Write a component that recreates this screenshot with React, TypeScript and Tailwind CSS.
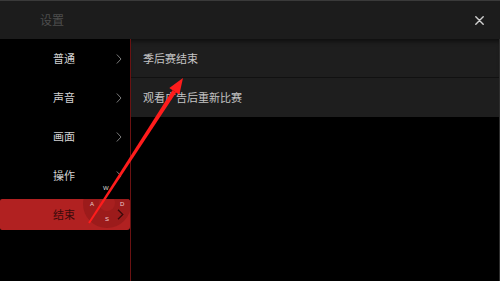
export default function App() {
  const items = ["普通", "声音", "画面", "操作"];
  return (
    <div className="relative w-[500px] h-[281px] overflow-hidden bg-black font-['Noto_Sans_CJK_SC',sans-serif]">
      <div className="h-[39px] bg-[#1c1c1c] border-t border-[#3a3a3a] flex items-center justify-between pl-[40px] pr-[16px]">
        <span className="text-[12px] text-[#4d4d4d] leading-none">设置</span>
        <svg width="9" height="9" viewBox="0 0 9 9">
          <path d="M0.8 0.8 L8.2 8.2 M8.2 0.8 L0.8 8.2" stroke="#d0d0d0" strokeWidth="1.4" strokeLinecap="round" />
        </svg>
      </div>
      <div className="flex h-[242px]">
        <div className="w-[131px] shrink-0 border-r border-[#6a1212] flex flex-col">
          {items.map((t) => (
            <div key={t} className="relative h-[39px] flex items-center">
              <span className="ml-[53px] text-[11px] text-[#d2d2d2] leading-none">{t}</span>
              <svg className="absolute right-[8px] top-[15px]" width="6" height="10" viewBox="0 0 6 10">
                <path d="M0.8 0.5 L5 5 L0.8 9.5" stroke="#7a7a7a" strokeWidth="1" fill="none" />
              </svg>
            </div>
          ))}
          <div className="h-[39px] flex items-center">
            <div className="relative h-[31px] w-[130px] bg-[#b12121] rounded-r-[3px] rounded-l-[2px] overflow-hidden flex items-center">
              <div className="absolute left-[83px] top-[-19px] w-[48px] h-[48px] rounded-full bg-[#9c1b1b]" />
              <div className="absolute left-[99px] top-[-4px] w-[16px] h-[16px] rounded-full bg-[#a81f1f]" />
              <span className="relative ml-[53px] text-[11px] text-[#3b0b0b] leading-none">结束</span>
              <svg className="absolute right-[6px] top-[10px]" width="7" height="11" viewBox="0 0 7 11">
                <path d="M1 0.8 L5.8 5.5 L1 10.2" stroke="#3a0a0a" strokeWidth="1.3" fill="none" />
              </svg>
            </div>
          </div>
        </div>
        <div className="flex-1 flex flex-col border-r border-[#2e2e2e]">
          <div className="h-[39px] bg-[#1e1e1e] border-b border-[#111111] flex items-center pl-[12px] shadow-[inset_0_5px_5px_-3px_rgba(0,0,0,0.6)]">
            <span className="text-[11px] text-[#c4c4c4] leading-none">季后赛结束</span>
          </div>
          <div className="h-[39px] bg-[#1e1e1e] flex items-center pl-[12px]">
            <span className="text-[11px] text-[#c4c4c4] leading-none">观看广告后重新比赛</span>
          </div>
        </div>
      </div>
      <span className="absolute left-[103px] top-[185px] text-[6px] leading-none text-[#dcdcdc] font-['Liberation_Sans',sans-serif]">W</span>
      <span className="absolute left-[90px] top-[201px] text-[6px] leading-none text-[#f0d0d0] font-['Liberation_Sans',sans-serif]">A</span>
      <span className="absolute left-[120px] top-[201px] text-[6px] leading-none text-[#f0d0d0] font-['Liberation_Sans',sans-serif]">D</span>
      <span className="absolute left-[105px] top-[216px] text-[6px] leading-none text-[#f0d0d0] font-['Liberation_Sans',sans-serif]">S</span>
      <svg className="absolute left-0 top-0 pointer-events-none" width="500" height="281" viewBox="0 0 500 281">
        <polygon points="88.2,222.5 89.8,223.5 176.2,92.6 172.4,90.2" fill="#ff1c1c" />
        <polygon points="183,78 179.3,94.7 169.3,88.1" fill="#ff1c1c" />
      </svg>
    </div>
  );
}
